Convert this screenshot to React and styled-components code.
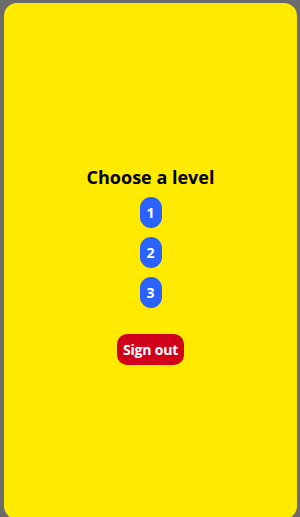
import styled, { createGlobalStyle } from 'styled-components';

const GlobalStyle = createGlobalStyle`
  html, body {
    margin: 0;
    padding: 0;
    background-color: #6b6b6b;
  }
  body {
    font-family: 'Open Sans', 'Noto Sans', sans-serif;
  }
`;

const Screen = styled.div`
  height: 517px;
  padding: 3px 3px 0 4px;
  box-sizing: border-box;
  overflow: hidden;
`;

const Card = styled.div`
  background-color: #ffea00;
  height: 516px;
  border-radius: 13px;
  display: flex;
  flex-direction: column;
  align-items: center;
  justify-content: center;
  padding-top: 8px;
  box-sizing: border-box;
`;

const Title = styled.h2`
  margin: 0 0 8px;
  font-size: 18px;
  font-weight: 700;
  color: #000;
  line-height: 24px;
`;

const Levels = styled.div`
  display: flex;
  flex-direction: column;
  align-items: center;
  gap: 9px;
`;

const LevelButton = styled.button`
  width: 22px;
  height: 31px;
  border: none;
  border-radius: 11px;
  background-color: #2962ff;
  color: #fff;
  font-family: inherit;
  font-size: 14px;
  font-weight: 700;
  padding: 0;
  cursor: pointer;
`;

const SignOut = styled.button`
  margin-top: 26px;
  height: 31px;
  padding: 0 6px;
  border: none;
  border-radius: 10px;
  background-color: #d0021b;
  color: #fff;
  font-family: inherit;
  font-size: 14px;
  font-weight: 700;
  letter-spacing: -0.2px;
  cursor: pointer;
`;

const levels = [1, 2, 3];

const App = () => {
  return (
    <>
      <GlobalStyle />
      <Screen>
        <Card>
          <Title>Choose a level</Title>
          <Levels>
            {levels.map((n) => (
              <LevelButton key={n}>{n}</LevelButton>
            ))}
          </Levels>
          <SignOut>Sign out</SignOut>
        </Card>
      </Screen>
    </>
  );
};

export default App;
